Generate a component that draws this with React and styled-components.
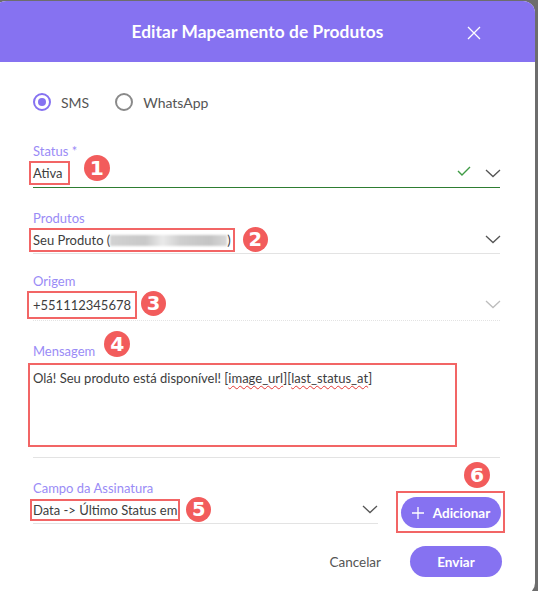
import React from "react";
import styled, { createGlobalStyle } from "styled-components";

const Global = createGlobalStyle`
  html, body { margin: 0; padding: 0; }
  body {
    background: #6d6d6d;
    font-family: Lato, "Open Sans", sans-serif;
    overflow: hidden;
    width: 538px;
    height: 591px;
  }
`;

const Dialog = styled.div`
  margin: 1px 0 0 -6px;
  width: 541px;
  height: 594px;
  background: #fff;
  border-radius: 12px;
  overflow: hidden;
  display: flex;
  flex-direction: column;
`;

const Header = styled.div`
  height: 61px;
  background: #8672f1;
  display: flex;
  align-items: center;
  justify-content: center;
  position: relative;
  color: #fff;
`;

const Title = styled.h2`
  margin: 0 14px 1px 0;
  font-size: 17.3px;
  font-weight: 700;
  letter-spacing: 0.1px;
`;

const CloseBtn = styled.button`
  position: absolute;
  right: 54px;
  top: 25px;
  width: 14px;
  height: 14px;
  padding: 0;
  border: 0;
  background: none;
  display: flex;
`;

const Body = styled.div`
  padding: 0 35px 0 39px;
  display: flex;
  flex-direction: column;
  position: relative;
`;

const RadioRow = styled.div`
  display: flex;
  align-items: center;
  gap: 26px;
  height: 20px;
  margin-top: 30px;
`;

const RadioLabel = styled.label`
  display: flex;
  align-items: center;
  gap: 10px;
  font-size: 14px;
  color: #555;
`;

const RadioCircle = styled.span`
  width: 14px;
  height: 14px;
  border-radius: 50%;
  border: 2px solid ${(p) => (p.$checked ? "#8672f1" : "#8a8a8a")};
  display: flex;
  align-items: center;
  justify-content: center;
  &::after {
    content: "";
    width: 8px;
    height: 8px;
    border-radius: 50%;
    background: ${(p) => (p.$checked ? "#8672f1" : "transparent")};
  }
`;

const Field = styled.div`
  display: flex;
  flex-direction: column;
  margin-top: ${(p) => p.$mt}px;
  width: ${(p) => (p.$w ? `${p.$w}px` : "auto")};
`;

const Label = styled.div`
  font-size: 13px;
  line-height: 16px;
  color: #9a8bf6;
  display: flex;
  align-items: center;
  gap: 9px;
  height: 16px;
`;

const Row = styled.div`
  height: ${(p) => p.$h}px;
  display: flex;
  align-items: center;
  border-bottom: 1px ${(p) => (p.$dotted ? "dotted" : "solid")}
    ${(p) => p.$line || "#e3e3e3"};
  box-sizing: border-box;
`;

const Value = styled.span`
  font-size: 13px;
  color: #3d3d3d;
  outline: 2.5px solid #f26565;
  outline-offset: ${(p) => p.$off ?? 2}px;
  white-space: nowrap;
  line-height: 16px;
`;

const Blur = styled.span`
  display: inline-block;
  width: 117px;
  height: 11px;
  vertical-align: -1px;
  background: linear-gradient(90deg, #d2d2d2 0%, #c8c8c8 30%, #eaeaea 45%, #cfcfcf 60%, #c4c4c4 85%, #d8d8d8 100%);
  filter: blur(1.2px);
`;

const Badge = styled.span`
  width: ${(p) => p.$s ?? 24}px;
  height: ${(p) => p.$s ?? 24}px;
  border-radius: 50%;
  background: #f25c5c;
  color: #fff;
  font-family: "DejaVu Sans", sans-serif;
  font-weight: 700;
  font-size: ${(p) => ((p.$s ?? 24) * 0.78).toFixed(1)}px;
  display: inline-flex;
  align-items: center;
  justify-content: center;
  margin-left: ${(p) => p.$ml ?? 16}px;
  margin-top: ${(p) => p.$mt ?? 0}px;
  flex-shrink: 0;
`;

const Spacer = styled.span`
  flex: 1;
`;

const Chevron = ({ color = "#555" }) => (
  <svg width="16" height="9" viewBox="0 0 16 9" fill="none">
    <path d="M1 1l7 6.5L15 1" stroke={color} strokeWidth="1.3" />
  </svg>
);

const Check = () => (
  <svg width="14" height="10" viewBox="0 0 14 10" fill="none">
    <path d="M1 5l4 4 8-8" stroke="#3f9b45" strokeWidth="1.4" />
  </svg>
);

const IconBox = styled.span`
  display: flex;
  margin-left: ${(p) => p.$ml ?? 0}px;
  margin-right: ${(p) => p.$mr ?? 0}px;
  margin-top: ${(p) => p.$mt ?? 0}px;
`;

const MsgBox = styled.div`
  box-sizing: border-box;
  margin-top: 4px;
  margin-left: -5px;
  width: 429px;
  height: 84px;
  border: 2.5px solid #f26565;
  font-size: 13px;
  color: #3d3d3d;
  padding: 5px 0 0 3px;
  line-height: 16px;
`;

const MsgWrap = styled.div`
  border-bottom: 1px solid #e3e3e3;
  padding-bottom: 10px;
`;

const Spell = styled.span`
  text-decoration: underline wavy #e53935;
  text-decoration-thickness: 1px;
  text-underline-offset: 2px;
`;

const BottomRow = styled.div`
  display: flex;
  align-items: flex-start;
  justify-content: space-between;
`;

const AddWrap = styled.div`
  position: relative;
  margin-top: 33px;
  margin-right: -5px;
  padding: 4px 2px 3px 3px;
  border: 2.5px solid #f26565;
`;

const AddBadge = styled(Badge)`
  position: absolute;
  top: -31px;
  right: 13px;
  margin: 0;
`;

const PrimaryBtn = styled.button`
  border: 0;
  border-radius: 16px;
  background: #8672f1;
  color: #fff;
  font-family: inherit;
  font-size: 13.5px;
  font-weight: 700;
  height: 31px;
  width: ${(p) => p.$w}px;
  display: flex;
  align-items: center;
  justify-content: center;
  gap: 9px;
  padding: 0;
`;

const Footer = styled.div`
  display: flex;
  justify-content: flex-end;
  align-items: center;
  gap: 29px;
  margin: 13px -2px 0 0;
`;

const TextBtn = styled.button`
  border: 0;
  background: none;
  font-family: inherit;
  font-size: 13.5px;
  color: #555;
  padding: 0;
`;

export default function App() {
  return (
    <>
      <Global />
      <Dialog>
        <Header>
          <Title>Editar Mapeamento de Produtos</Title>
          <CloseBtn aria-label="Fechar">
            <svg width="14" height="14" viewBox="0 0 14 14">
              <path d="M1 1l12 12M13 1L1 13" stroke="#fff" strokeWidth="1.3" />
            </svg>
          </CloseBtn>
        </Header>
        <Body>
          <RadioRow>
            <RadioLabel>
              <RadioCircle $checked />
              SMS
            </RadioLabel>
            <RadioLabel>
              <RadioCircle />
              WhatsApp
            </RadioLabel>
          </RadioRow>

          <Field $mt={31}>
            <Label>Status *</Label>
            <Row $h={29} $line="#2e7d32">
              <Value $off={2}>Ativa&nbsp;</Value>
              <Badge $s={26} $ml={18} $mt={-10}>1</Badge>
              <Spacer />
              <IconBox $mr={14} $mt={-5}><Check /></IconBox>
              <IconBox $mr={-1}><Chevron /></IconBox>
            </Row>
          </Field>

          <Field $mt={22}>
            <Label>Produtos</Label>
            <Row $h={28}>
              <Value>
                Seu Produto (<Blur />)
              </Value>
              <Badge $s={25} $ml={12}>2</Badge>
              <Spacer />
              <IconBox $mr={-1}><Chevron /></IconBox>
            </Row>
          </Field>

          <Field $mt={19}>
            <Label>Origem</Label>
            <Row $h={32} $dotted>
              <Value $off={4}>+551112345678</Value>
              <Badge $s={25} $ml={10} $mt={-3}>3</Badge>
              <Spacer />
              <IconBox $mr={-1}><Chevron color="#bdbdbd" /></IconBox>
            </Row>
          </Field>

          <Field $mt={22}>
            <Label>
              Mensagem
              <Badge $s={26} $ml={0} $mt={-14}>4</Badge>
            </Label>
            <MsgWrap>
              <MsgBox>
                Olá! Seu produto está disponível! [<Spell>image_url</Spell>][
                <Spell>last_status_at</Spell>]
              </MsgBox>
            </MsgWrap>
          </Field>

          <BottomRow>
            <Field $mt={22} $w={345}>
              <Label>Campo da Assinatura</Label>
              <Row $h={28}>
                <Value $off={1}>Data -&gt; Último Status em</Value>
                <Badge $s={25} $ml={9}>5</Badge>
                <Spacer />
                <IconBox $mr={0}><Chevron /></IconBox>
              </Row>
            </Field>
            <AddWrap>
              <AddBadge $s={26}>6</AddBadge>
              <PrimaryBtn $w={100}>
                <svg width="12" height="12" viewBox="0 0 12 12">
                  <path d="M6 0v12M0 6h12" stroke="#fff" strokeWidth="1.3" />
                </svg>
                Adicionar
              </PrimaryBtn>
            </AddWrap>
          </BottomRow>

          <Footer>
            <TextBtn>Cancelar</TextBtn>
            <PrimaryBtn $w={92}>Enviar</PrimaryBtn>
          </Footer>
        </Body>
      </Dialog>
    </>
  );
}
